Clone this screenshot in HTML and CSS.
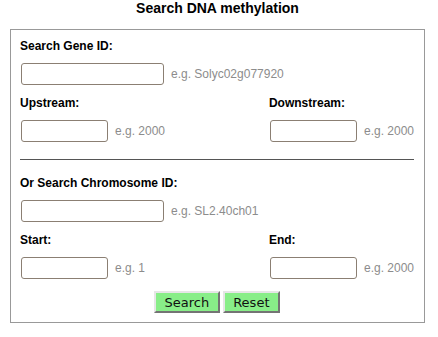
FILE: index.html
```html
<!DOCTYPE html>
<html lang="en">
<head>
  <meta charset="UTF-8" />
  <title>Search DNA methylation</title>
  <link rel="stylesheet" href="styles.css">
</head>
<body>

  <div class="page">
    <h2 class="title">Search DNA methylation</h2>

    <form class="search-box" id="searchForm">
      <!-- gene search -->
      <label class="field-label" for="geneId">Search Gene ID:</label>
      <div class="field">
        <input type="text" class="text-input wide" id="geneId" />
        <span class="hint">e.g. Solyc02g077920</span>
      </div>

      <div class="pair">
        <div class="pair-cell">
          <label class="field-label" for="upstream">Upstream:</label>
          <div class="field">
            <input type="text" class="text-input" id="upstream" />
            <span class="hint">e.g. 2000</span>
          </div>
        </div>
        <div class="pair-cell">
          <label class="field-label" for="downstream">Downstream:</label>
          <div class="field">
            <input type="text" class="text-input" id="downstream" />
            <span class="hint">e.g. 2000</span>
          </div>
        </div>
      </div>

      <hr class="divider" />

      <!-- chromosome search -->
      <label class="field-label" for="chrId">Or Search Chromosome ID:</label>
      <div class="field">
        <input type="text" class="text-input wide" id="chrId" />
        <span class="hint">e.g. SL2.40ch01</span>
      </div>

      <div class="pair">
        <div class="pair-cell">
          <label class="field-label" for="start">Start:</label>
          <div class="field">
            <input type="text" class="text-input" id="start" />
            <span class="hint">e.g. 1</span>
          </div>
        </div>
        <div class="pair-cell">
          <label class="field-label" for="end">End:</label>
          <div class="field">
            <input type="text" class="text-input" id="end" />
            <span class="hint">e.g. 2000</span>
          </div>
        </div>
      </div>

      <div class="actions">
        <button type="submit" class="btn">Search</button>
        <button type="reset" class="btn">Reset</button>
      </div>
    </form>
  </div>

</body>
</html>
```

FILE: styles.css
```css
* {
  box-sizing: border-box;
  margin: 0;
  padding: 0;
}

body {
  font-family: "Liberation Sans", Arial, sans-serif;
  background: #ffffff;
  color: #000000;
}

.page {
  margin-left: 10px;
  width: 415px;
}

.title {
  font-size: 14px;
  line-height: 16px;
  font-weight: bold;
  text-align: center;
  margin-bottom: 13px;
}

.search-box {
  display: flex;
  flex-direction: column;
  border: 1px solid #999999;
  padding: 9px 10px 9px 9px;
}

.field-label {
  display: block;
  font-size: 12px;
  line-height: 14px;
  font-weight: bold;
}

.field {
  display: flex;
  align-items: center;
  gap: 7px;
  margin: 10px 0 11px 1px;
}

.text-input {
  width: 87px;
  height: 22px;
  border: 1px solid #8b7f73;
  border-radius: 3px;
  background: #ffffff;
}

.text-input.wide {
  width: 143px;
}

.hint {
  font-size: 12px;
  line-height: 14px;
  color: #8c8c8c;
}

.pair {
  display: grid;
  grid-template-columns: 1fr auto;
}

.divider {
  border: none;
  border-top: 1px solid #555555;
  margin: 6px 0 16px;
}

.actions {
  display: flex;
  justify-content: center;
  gap: 3px;
  margin-top: 1px;
}

.btn {
  font-family: "DejaVu Sans", sans-serif;
  font-size: 13px;
  height: 22px;
  padding: 0 8.5px;
  color: #111111;
  background: #88ee88;
  border-top: 2px solid #e6e6e6;
  border-left: 2px solid #e6e6e6;
  border-right: 2px solid #747474;
  border-bottom: 2px solid #747474;
  cursor: pointer;
}
```
